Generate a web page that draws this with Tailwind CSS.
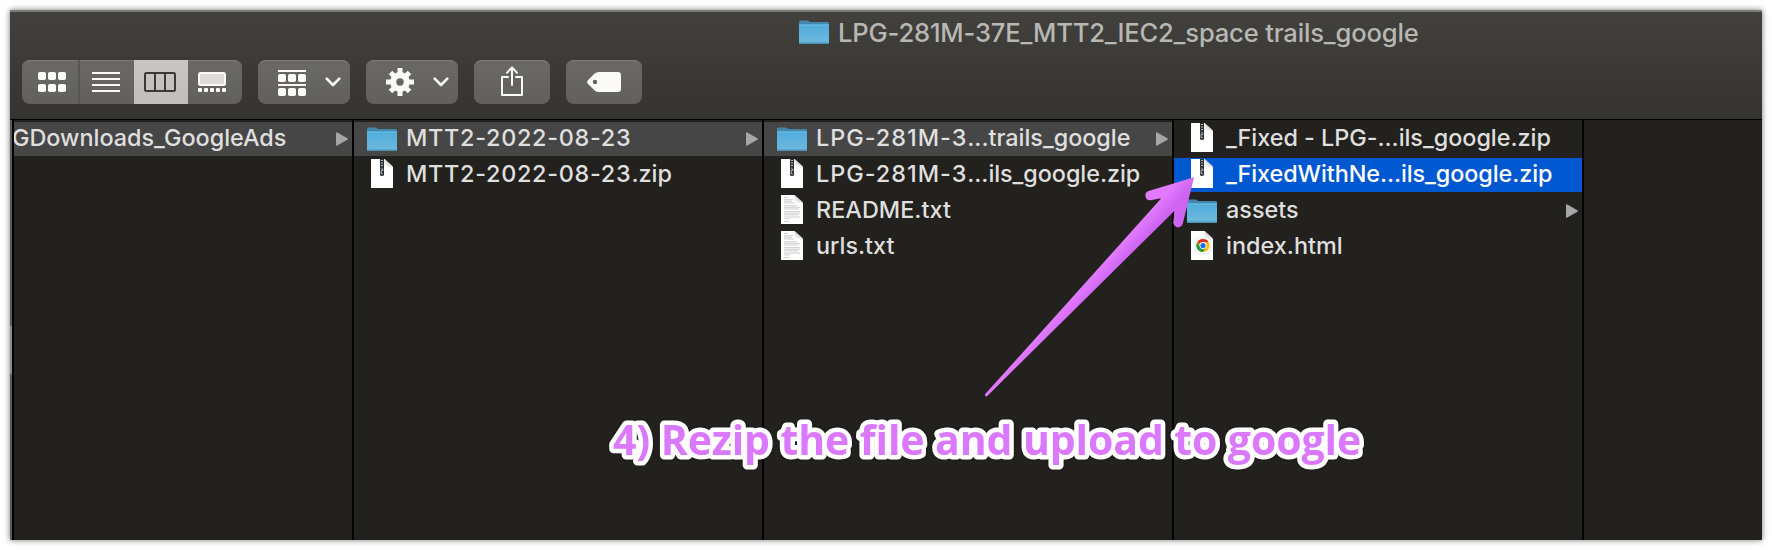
<!DOCTYPE html>
<html lang="en">
<head>
<meta charset="utf-8">
<title>LPG-281M-37E_MTT2_IEC2_space trails_google</title>
<script src="https://cdn.jsdelivr.net/npm/@tailwindcss/browser@4"></script>
</head>
<body class="relative h-[550px] w-[1772px] overflow-hidden bg-white p-[10px] font-['Inter','Liberation_Sans',sans-serif]">
<svg class="absolute h-0 w-0">
  <defs>
    <linearGradient id="fg" x1="0" y1="0" x2="0" y2="1"><stop offset="0" stop-color="#4fabda"/><stop offset=".25" stop-color="#58b0dc"/><stop offset="1" stop-color="#6ebadd"/></linearGradient>
    <linearGradient id="fold" x1="0" y1="1" x2="1" y2="0"><stop offset="0" stop-color="#fff"/><stop offset=".55" stop-color="#d4d4d4"/><stop offset="1" stop-color="#f4f4f4"/></linearGradient>
    <symbol id="folder" viewBox="0 0 30 24" preserveAspectRatio="none">
      <path d="M0 2Q0 .4 1.4 .4H8.6Q9.6 .4 10.3 1.2L11 2H28.5Q30 2 30 3.4V7H0Z" fill="#4387aa"/>
      <path d="M0 4.6H30V22.4Q30 24 28.6 24H1.4Q0 24 0 22.4Z" fill="url(#fg)"/>
      <path d="M0 5H30" stroke="#7cc8ea" stroke-width=".8"/>
      <path d="M0 22.6H30Q30 24 28.6 24H1.4Q0 24 0 22.6Z" fill="#4587a6" opacity=".75"/>
    </symbol>
    <symbol id="page" viewBox="0 0 22 29">
      <path d="M0 0H13.5L22 8V29H0Z" fill="#fff"/>
      <path d="M13.5 0V6.6Q13.5 7.6 14.5 7.6H22Z" fill="url(#fold)"/>
    </symbol>
    <symbol id="zip" viewBox="0 0 22 29">
      <use href="#page" width="22" height="29"/>
      <path d="M9 0H13V15.5Q13 17 11 17Q9 17 9 15.5Z" fill="#2c3033"/>
      <path d="M10 1.5H12M10 4H12M10 6.5H12M10.2 8.8L11.8 10.2V12M10.2 10.5V14.8H11.8" stroke="#c5ccd0" stroke-width=".9" fill="none"/>
    </symbol>
    <symbol id="txt" viewBox="0 0 22 29">
      <use href="#page" width="22" height="29"/>
      <path d="M3 2.5H7M3 4.7H12M3 6.3H11M3 8H13M3 10.7H16M3 12.3H19M3 14H18M3 16.6H19M3 18.2H19M3 19.8H17M3 22H19M3 23.8H9M3 26.5H8" stroke="#b9b9b9" stroke-width=".7" fill="none"/>
    </symbol>
    <symbol id="html" viewBox="0 0 22 29">
      <use href="#page" width="22" height="29"/>
      <rect x="4.2" y="7" width="15.6" height="15.4" rx="3.2" fill="#fff" stroke="#dedede" stroke-width=".7"/>
      <circle cx="12" cy="14.5" r="6.6" fill="#fbc116"/>
      <path d="M12 14.5L6.28 11.2A6.6 6.6 0 0 1 17.72 11.2H12Z" fill="#dc2f23"/>
      <path d="M6.28 11.2A6.6 6.6 0 0 0 12 21.1L14.9 16.1L12 14.5L9.1 16.1Z" fill="#1f9a4b"/>
      <circle cx="12" cy="14.5" r="3.4" fill="#fff"/><circle cx="12" cy="14.5" r="2.6" fill="#1f6be4"/>
    </symbol>
    <symbol id="tri" viewBox="0 0 12 14"><path d="M0 1.2Q0 -.3 1.3 .4L11.4 6.2Q12.4 7 11.4 7.8L1.3 13.6Q0 14.3 0 12.8Z" fill="#a6a6a6"/></symbol>
    <symbol id="chev" viewBox="0 0 16 10"><path d="M1.7 1.7L8 8L14.3 1.7" fill="none" stroke="#fbfaf7" stroke-width="2.6" stroke-linecap="round" stroke-linejoin="round"/></symbol>
  </defs>
</svg>

<main class="flex h-[530px] w-[1752px] flex-col bg-[#23211e] shadow-[0_0_6px_rgba(0,0,0,0.55)]">
  <header class="flex h-[110px] flex-col border-t-2 border-b border-t-[#7b7b78] border-b-black bg-linear-to-b from-[#43413d] to-[#353330] bg-origin-border">
    <h1 class="flex h-12 items-start pt-2 pl-[789px]">
      <svg class="h-6 w-[30px] shrink-0"><use href="#folder"/></svg>
      <span class="-mt-px ml-[9px] text-[25.6px] leading-[27px] font-[450] whitespace-nowrap text-[#b8b7b4] tracking-[-0.18px]">LPG-281M-37E_MTT2_IEC2_space trails_google</span>
    </h1>
    <nav class="flex gap-4 pl-3 *:h-11 *:rounded-[8px] *:bg-linear-to-b *:from-[#6b6965] *:to-[#62605c] *:shadow-[inset_0_1px_0_#7c7a77]">
      <div class="flex w-[220px] items-center overflow-hidden">
        <span class="flex h-full w-[58px] items-center border-r-2 border-[#575551] pl-4">
          <svg class="h-5 w-7" fill="#fbfaf7"><rect width="8" height="8" rx="1.8"/><rect x="10" width="8" height="8" rx="1.8"/><rect x="20" width="8" height="8" rx="1.8"/><rect y="12" width="8" height="8" rx="1.8"/><rect x="10" y="12" width="8" height="8" rx="1.8"/><rect x="20" y="12" width="8" height="8" rx="1.8"/></svg>
        </span>
        <span class="flex w-[54px] pl-3"><svg class="h-5 w-7"><path d="M0 1H28M0 7H28M0 13H28M0 19H28" stroke="#fbfaf7" stroke-width="2"/></svg></span>
        <span class="flex h-full w-[54px] items-center bg-linear-to-b from-[#c8c7c4] to-[#bfbebb] pl-[10px]"><svg class="h-5 w-8" fill="none" stroke="#3b3936" stroke-width="2"><rect x="1" y="1" width="30" height="18" rx="1.5"/><path d="M11 1V19M21 1V19"/></svg></span>
        <span class="flex pl-[10px]"><svg class="h-5 w-7" fill="#fbfaf7"><rect x="1" y="1" width="26" height="12" rx="1.5" fill="#dddcd9" stroke="#fbfaf7" stroke-width="2"/><rect y="16" width="4" height="4" rx="1"/><rect x="6" y="16" width="4" height="4" rx="1"/><rect x="12" y="16" width="4" height="4" rx="1"/><rect x="18" y="16" width="4" height="4" rx="1"/><rect x="24" y="16" width="4" height="4" rx="1"/></svg></span>
      </div>
      <div class="flex w-[92px] items-center pl-5">
        <svg class="mt-[2px] h-[26px] w-7" fill="#fbfaf7"><path d="M0 0H28V2H0ZM0 14H28V16H0Z"/><rect y="4" width="8" height="8" rx="1.8"/><rect x="10" y="4" width="8" height="8" rx="1.8"/><rect x="20" y="4" width="8" height="8" rx="1.8"/><rect y="18" width="8" height="8" rx="1.8"/><rect x="10" y="18" width="8" height="8" rx="1.8"/><rect x="20" y="18" width="8" height="8" rx="1.8"/></svg>
        <svg class="ml-[19px] h-[10px] w-4"><use href="#chev"/></svg>
      </div>
      <div class="flex w-[92px] items-center pl-5">
        <svg class="h-7 w-7" viewBox="-14 -14 28 28">
          <g fill="none" stroke="#fbfaf7"><circle r="6.8" stroke-width="6.2"/><path d="M0 -14V-8M0 14V8M-14 0H-8M14 0H8M-9.5 -9.5L-6 -6M9.5 -9.5L6 -6M-9.5 9.5L-6 6M9.5 9.5L6 6" stroke-width="5"/></g>
        </svg>
        <svg class="ml-[19px] h-[10px] w-4"><use href="#chev"/></svg>
      </div>
      <div class="flex w-[76px] justify-center pt-[6px]">
        <svg class="h-[30px] w-[22px]" fill="none" stroke="#fbfaf7" stroke-width="2" stroke-linejoin="round" stroke-linecap="round"><path d="M7 11H1V29H21V11H15"/><path d="M11 19V1.4M6 6.8L11 1.4L16 6.8"/></svg>
      </div>
      <div class="flex w-[76px] items-center pl-[21px]">
        <svg class="h-5 w-[34px]"><path fill-rule="evenodd" d="M12 0H31Q34 0 34 3V17Q34 20 31 20H12Q9.5 20 7.6 18.4L.9 11.8Q-.7 10 .9 8.2L7.6 1.6Q9.5 0 12 0ZM8 7.8a2.2 2.2 0 1 0 0 4.4a2.2 2.2 0 1 0 0-4.4Z" fill="#fbfaf7"/></svg>
      </div>
    </nav>
  </header>

  <div class="flex h-[420px] text-[23.4px] leading-[32px] font-[450] whitespace-nowrap text-[#dfdfde]">
    <div class="w-[2px] bg-[#5c5b56] pt-[206px]"><div class="h-12 bg-[#8e8d88]"></div></div>
    <section class="w-[342px] overflow-hidden border-x-2 border-black pt-[2px]">
      <div class="flex h-[34px] items-center bg-[#464646]"><span class="-mt-[2px] -ml-[2px] w-[324px] tracking-[-0.01px]">GDownloads_GoogleAds</span><svg class="mb-px h-[14px] w-3"><use href="#tri"/></svg></div>
    </section>
    <section class="flex w-[410px] flex-col gap-[2px] border-r-2 border-black pt-[2px]">
      <div class="flex h-[34px] items-center bg-[#464646] pl-[13px]"><svg class="mb-px h-6 w-[30px]"><use href="#folder"/></svg><span class="-mt-[2px] ml-[9px] w-[340px] tracking-[0.72px]">MTT2-2022-08-23</span><svg class="mb-px h-[14px] w-3"><use href="#tri"/></svg></div>
      <div class="flex h-[34px] pl-[17px]"><svg class="mt-px h-[29px] w-[22px]"><use href="#zip"/></svg><span class="ml-[13px]"><span class="tracking-[0.72px]">MTT2-2022-08-23</span><span>.zip</span></span></div>
    </section>
    <section class="flex w-[410px] flex-col gap-[2px] border-r-2 border-black pt-[2px]">
      <div class="flex h-[34px] items-center bg-[#464646] pl-[13px]"><svg class="mb-px h-6 w-[30px]"><use href="#folder"/></svg><span class="-mt-[2px] ml-[9px] w-[340px]"><span class="tracking-[1px]">LPG-281M-3</span><span class="tracking-[-0.03px]">...trails_google</span></span><svg class="mb-px h-[14px] w-3"><use href="#tri"/></svg></div>
      <div class="flex h-[34px] pl-[17px]"><svg class="mt-px h-[29px] w-[22px]"><use href="#zip"/></svg><span class="ml-[13px]"><span class="tracking-[1px]">LPG-281M-3</span><span class="tracking-[-0.06px]">...ils_google.zip</span></span></div>
      <div class="flex h-[34px] pl-[17px]"><svg class="mt-px h-[29px] w-[22px]"><use href="#txt"/></svg><span class="ml-[13px] tracking-[0.03px]">README.txt</span></div>
      <div class="flex h-[34px] pl-[17px]"><svg class="mt-px h-[29px] w-[22px]"><use href="#txt"/></svg><span class="ml-[13px]">urls.txt</span></div>
    </section>
    <section class="flex w-[410px] flex-col gap-[2px] border-r-2 border-black pt-[2px]">
      <div class="flex h-[34px] pl-[17px]"><svg class="mt-px h-[29px] w-[22px]"><use href="#zip"/></svg><span class="ml-[13px] tracking-[-0.03px]">_Fixed - LPG-...ils_google.zip</span></div>
      <div class="flex h-[34px] bg-[#0058d0] pl-[17px] text-white"><svg class="mt-px h-[29px] w-[22px]"><use href="#zip"/></svg><span class="ml-[13px] tracking-[-0.08px]">_FixedWithNe...ils_google.zip</span></div>
      <div class="flex h-[34px] items-center pl-[13px]"><svg class="mb-px h-6 w-[30px]"><use href="#folder"/></svg><span class="-mt-[2px] ml-[9px] w-[340px]">assets</span><svg class="mb-px h-[14px] w-3"><use href="#tri"/></svg></div>
      <div class="flex h-[34px] pl-[17px]"><svg class="mt-px h-[29px] w-[22px]"><use href="#html"/></svg><span class="ml-[13px] tracking-[0.03px]">index.html</span></div>
    </section>
  </div>
</main>

<svg class="absolute top-[160px] left-[960px] h-[250px] w-[260px]" viewBox="960 160 260 250">
  <defs><linearGradient id="ag" gradientUnits="userSpaceOnUse" x1="1086" y1="283" x2="1096" y2="292"><stop offset="0" stop-color="#e27aff"/><stop offset="1" stop-color="#ce65f1"/></linearGradient></defs>
  <path d="M1194 177.3L1148.6 191A4.8 4.8 0 0 0 1150.5 200.3L1161.3 198.3L984.8 394.6Q985 397 987 396.2L1174.3 211L1173.4 221.5A4.8 4.8 0 0 0 1182.8 223.6Z" fill="url(#ag)"/>
</svg>
<svg class="absolute top-[410px] left-[600px] h-[70px] w-[780px] overflow-visible drop-shadow-[0_0_1px_rgba(0,0,0,0.5)]">
  <text x="613" y="455" transform="translate(-600 -410)" class="fill-[#da78fe] stroke-white stroke-[9px] font-['Open_Sans','Noto_Sans',sans-serif] text-[41px] font-bold tracking-[-0.1px] [paint-order:stroke] [stroke-linejoin:round]">4) Rezip the file and upload to google</text>
</svg>
</body>
</html>
